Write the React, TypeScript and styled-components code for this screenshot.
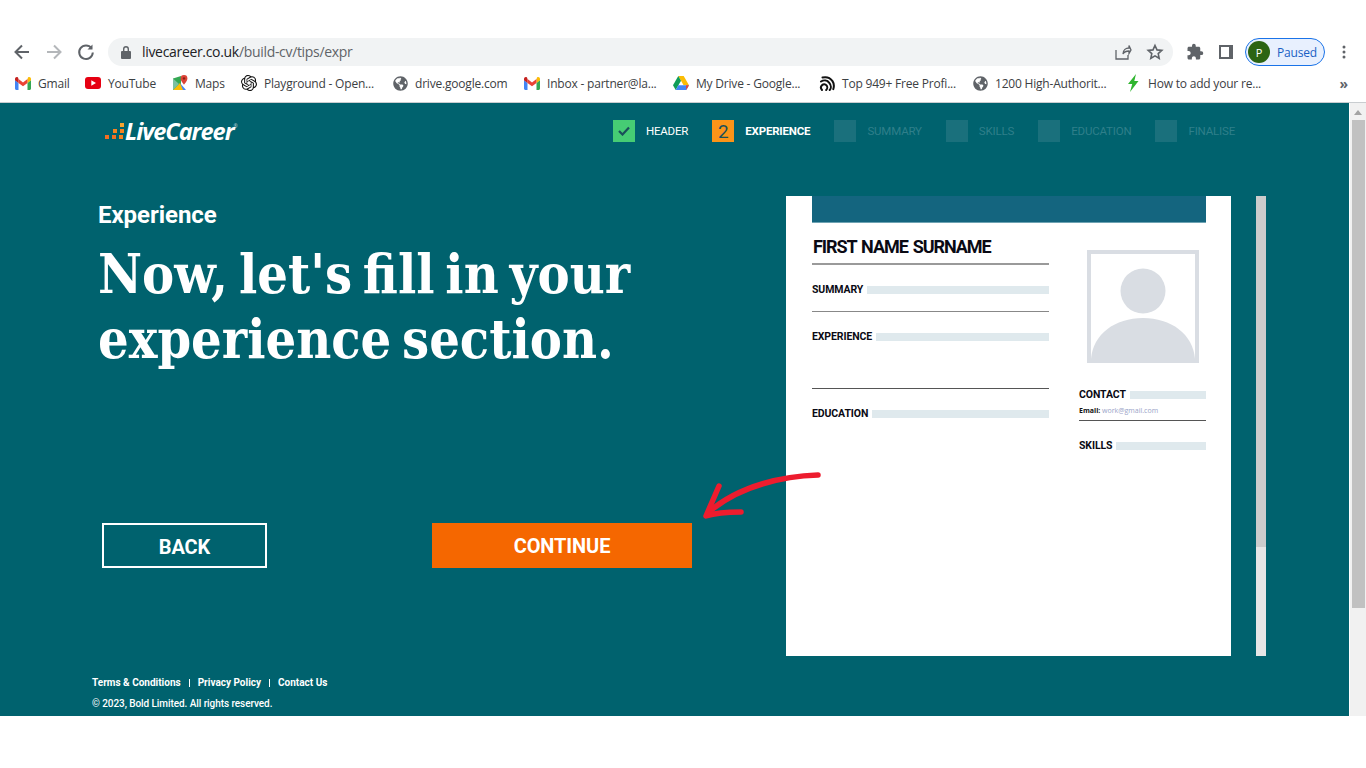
import React from 'react';
import styled, { createGlobalStyle } from 'styled-components';
import { SiOpenai } from 'react-icons/si';
import { FaGlobeAmericas } from 'react-icons/fa';
import { MdExtension } from 'react-icons/md';

const Global = createGlobalStyle`
  html, body { margin: 0; padding: 0; background: #fff; overflow: hidden; }
  * { box-sizing: border-box; }
`;

const Shell = styled.div`
  width: 1366px; height: 768px; display: flex; flex-direction: column; position: relative;
  font-family: "Roboto", "Liberation Sans", sans-serif; background: #fff;
`;
const BrowserChrome = styled.header`
  height: 103px; padding-top: 38px; border-bottom: 1px solid #c9cdd0; background: #fff;
  display: flex; flex-direction: column;
`;
const Toolbar = styled.div`display: flex; align-items: center; height: 28px; padding-left: 12px;`;
const NavGroup = styled.div`display: flex; gap: 12px; margin-right: 12px;`;
const NavIcon = styled.svg`width: 20px; height: 20px; display: block; fill: none;`;
const Omnibox = styled.div`
  width: 1065px; height: 28px; border-radius: 14px; background: #f1f3f4;
  display: flex; align-items: center; padding: 0 9px 0 12px;
`;
const Url = styled.span`
  font: 14px/18px "Open Sans", sans-serif; letter-spacing: -0.32px; color: #5f6368; margin: 0 0 0 10px; flex: 1; white-space: nowrap;
  b { font-weight: 400; color: #202124; }
`;
const OmniActions = styled.div`display: flex; gap: 14px; align-items: center;`;
const ToolActions = styled.div`display: flex; align-items: center; margin-left: 13px;`;
const SidePanelIcon = styled.svg`margin-left: 15px; width: 14px; height: 14px;`;
const MenuIcon = styled.svg`margin-left: 17px; width: 4px; height: 14px;`;
const Pill = styled.div`
  width: 80px; height: 28px; margin-left: 12px; border: 1px solid #1a73e8; border-radius: 14px; background: #e8f0fe;
  display: flex; align-items: center; padding-left: 2px; color: #1a5fc4; font: 12px "Open Sans", sans-serif; letter-spacing: -0.2px;
`;
const Avatar = styled.span`
  width: 22px; height: 22px; border-radius: 50%; background: #2c6413; color: #fff; font-size: 11px;
  display: flex; align-items: center; justify-content: center; margin-right: 7px;
`;
const Bookmarks = styled.nav`
  display: flex; align-items: center; height: 34px; padding-left: 15px;
`;
const Bookmark = styled.div<{ $w: number }>`
  display: flex; align-items: center; gap: 7px; width: ${p => p.$w}px; flex: none; white-space: nowrap;
  font: 12px "Open Sans", sans-serif; letter-spacing: -0.2px; color: #3c4043;
`;
const BmIcon = styled.span`width: 16px; height: 16px; display: flex; align-items: center; justify-content: center; flex: none;`;
const More = styled.span`margin-left: auto; margin-right: 18px; font: 700 14px "Open Sans", sans-serif; color: #5f6368;`;

const Viewport = styled.div`display: flex; height: 613px;`;
const Page = styled.main`
  width: 1349px; background: #00626e; display: flex; flex-direction: column; color: #fff;
`;
const Scrollbar = styled.div`
  width: 17px; background: #f1f1f1; border-left: 1px solid #fff; display: flex; flex-direction: column; align-items: center;
`;
const ScrollArrow = styled.div`
  width: 0; height: 0; border: 4px solid transparent; border-top: 0; border-bottom: 5px solid #a3a3a3; margin: 7px 0 5px;
`;
const ScrollThumb = styled.div`width: 13px; height: 488px; background: #c1c1c1;`;

const TopRow = styled.div`
  height: 56px; display: flex; align-items: center; justify-content: space-between; padding: 0 114px 0 105px;
`;
const Logo = styled.div`display: flex; align-items: center; gap: 1px; height: 20px;`;
const LogoText = styled.span`
  font: italic 700 23.5px "Open Sans", sans-serif; letter-spacing: -1px; color: #fff; position: relative;
  sup { font-size: 5px; position: absolute; right: -4px; top: 8px; opacity: .7; font-style: normal; font-weight: 400; letter-spacing: 0; }
`;
const Steps = styled.ol`display: flex; gap: 24px; margin: 0; padding: 0; list-style: none;`;
const Step = styled.li`display: flex; align-items: center; gap: 11px;`;
const StepBox = styled.span<{ $state: string }>`
  width: 22px; height: 22px; display: flex; align-items: center; justify-content: center; font-size: 19px; color: #1a4f5a;
  background: ${p => (p.$state === 'done' ? '#46cc74' : p.$state === 'active' ? '#fb9418' : '#1a707c')};
`;
const StepLabel = styled.span<{ $state: string }>`
  font-size: 11.5px; letter-spacing: -0.18px; white-space: nowrap;
  font-weight: ${p => (p.$state === 'active' ? 700 : 400)};
  color: ${p => (p.$state === 'todo' ? '#2f7f8a' : '#fff')};
`;

const Content = styled.div`display: flex; margin-top: 37px; height: 460px;`;
const Left = styled.section`width: 786px; padding-left: 98px; display: flex; flex-direction: column;`;
const Eyebrow = styled.h2`margin: 5px 0 0; font-size: 24px; line-height: 28px; font-weight: 700; letter-spacing: -0.05px;`;
const Title = styled.h1`
  margin: 13px 0 0; font: 700 53.6px/65px "DejaVu Serif", "Liberation Serif", serif; font-stretch: condensed; word-spacing: -6px; width: 620px;
`;
const Actions = styled.div`display: flex; gap: 165px; margin-top: 151px; margin-left: 4px;`;
const Btn = styled.button<{ $primary?: boolean }>`
  height: 45px; width: ${p => (p.$primary ? 260 : 165)}px; padding: ${p => (p.$primary ? 0 : '2px 0 0')};
  font: 700 20px "Roboto", sans-serif; color: #fff; letter-spacing: -0.1px;
  background: ${p => (p.$primary ? '#f56700' : 'transparent')};
  border: ${p => (p.$primary ? 'none' : '2px solid #fff')};
`;

const Preview = styled.div`display: flex; gap: 25px;`;
const Sheet = styled.article`
  width: 445px; height: 460px; background: #fff; padding: 0 25px 0 26px; color: #0a0a14;
  font-family: "Open Sans", sans-serif;
`;
const Banner = styled.div`height: 27px; background: #14657f; border-bottom: 1px solid #6ea3b3;`;
const Columns = styled.div`display: flex; gap: 30px;`;
const MainCol = styled.div`width: 237px; padding-top: 14px;`;
const SideCol = styled.div`width: 127px; padding-top: 27px;`;
const Name = styled.div`
  font: 700 18px/20px "Roboto", sans-serif; letter-spacing: -1.05px; word-spacing: 1.5px; padding: 0 0 6px 1px; border-bottom: 2px solid #9a9a9a; white-space: nowrap;
`;
const SectionRow = styled.div<{ $mt: number }>`
  display: flex; align-items: center; gap: 4px; margin-top: ${p => p.$mt}px; height: 12px;
`;
const SectionName = styled.span`font: 700 10.5px/12px "Roboto", sans-serif; letter-spacing: -0.1px; white-space: nowrap;`;
const Filler = styled.span`flex: 1; height: 8px; background: #dfe9ed;`;
const Rule = styled.div<{ $mt: number; $c?: string }>`
  height: 1px; margin-top: ${p => p.$mt}px; background: ${p => p.$c || '#777'};
`;
const Photo = styled.div`
  width: 112px; height: 113px; margin-left: 8px; border: 4px solid #d9dde3; display: block; overflow: hidden;
`;
const PhotoSvg = styled.svg`width: 104px; height: 105px; display: block;`;
const Email = styled.div`
  font: 7px/10px "Open Sans", sans-serif; color: #9aa4c8; margin-top: 5px; white-space: nowrap;
  b { color: #111; font-weight: 700; }
`;
const Track = styled.div`width: 10px; height: 460px; background: #e6e6e6;`;
const Thumb = styled.div`height: 351px; background: #cccccc;`;

const Foot = styled.footer`padding: 21px 0 0 92px; font-size: 10px; font-weight: 700;`;
const FootLinks = styled.div`display: flex; align-items: center; gap: 8px; line-height: 12px; letter-spacing: 0;`;
const Sep = styled.span`width: 1px; height: 8px; background: #fff;`;
const Copy = styled.div`margin-top: 9px; line-height: 12px; font-weight: 500; letter-spacing: -0.07px;`;
const Arrow = styled.svg`position: absolute; left: 695px; top: 465px; width: 135px; height: 62px; pointer-events: none;`;

const Gmail = () => (
  <svg width="16" height="13" viewBox="0 0 16 13">
    <path d="M0 3v8.5C0 12.3.7 13 1.500 13H3.500V6z" fill="#4285f4" />
    <path d="M12.500 13h2c.8 0 1.500-.7 1.500-1.500V3l-3.500 3z" fill="#34a853" />
    <path d="M12.500 2v4L16 3.300V2c0-1.700-1.700-2.500-3-1.500z" fill="#fbbc04" />
    <path d="M3.500 6V2L8 5.400 12.500 2v4L8 9.300z" fill="#ea4335" />
    <path d="M0 2v1.300L3.500 6V2L3 .5C1.700-.5 0 .3 0 2z" fill="#c5221f" />
  </svg>
);
const Youtube = () => (
  <svg width="16" height="12" viewBox="0 0 16 12">
    <rect width="16" height="12" rx="3" fill="#e60012" />
    <path d="M6.300 3.200 11 6l-4.700 2.800z" fill="#fff" />
  </svg>
);
const Maps = () => (
  <svg width="16" height="16" viewBox="0 0 16 16">
    <path d="M1 3.500 9 1v14l-8 0z" fill="#34a853" />
    <path d="M1 15 8 8l4 7z" fill="#fbbc04" />
    <path d="M8 8l6 7H11z" fill="#4285f4" />
    <path d="M1 3.500 7 9l-6 6z" fill="#7cc0a0" />
    <path d="M12 0a3.400 3.400 0 0 0-3.400 3.400C8.600 6 12 9.500 12 9.500S15.400 6 15.400 3.400A3.400 3.400 0 0 0 12 0z" fill="#db4437" />
    <circle cx="12" cy="3.400" r="1.200" fill="#8c1f16" />
  </svg>
);
const Drive = () => (
  <svg width="16" height="14" viewBox="0 0 16 14">
    <path d="M5.300 0h5.400l5.300 9.300h-5.400z" fill="#fbbc04" />
    <path d="M5.300 0 0 9.300l2.700 4.700L8 4.700z" fill="#0f9d58" />
    <path d="M5.300 9.300H16L13.300 14H2.700z" fill="#4285f4" />
    <path d="M13.300 14 16 9.300h-3z" fill="#ea4335" />
  </svg>
);
const Signal = () => (
  <svg width="16" height="16" viewBox="0 0 16 16" fill="none" stroke="#111" strokeWidth="2" strokeLinecap="round">
    <path d="M3 15c-1.300-1.400-1.300-3.500 0-4.800s3.400-1.200 4.500.2 1 3.500-.3 4.600" />
    <path d="M2 6.500C4.800 4.800 8.300 5.300 10.300 7.800s2 5.600.4 7.200" />
    <path d="M3.500 2.500c4-.9 7.800.5 10 3.600 1.500 2.300 1.700 5.300.8 8" />
  </svg>
);
const Bolt = () => (
  <svg width="12" height="18" viewBox="0 0 12 18"><path d="M9 0 1 10h4.200L3 18 11.500 7H7.300z" fill="#2fb52f" /></svg>
);
const Globe = () => <FaGlobeAmericas size={15} color="#5f6368" />;

const marks = [
  { w: 70, t: 'Gmail', i: <Gmail /> },
  { w: 87, t: 'YouTube', i: <Youtube /> },
  { w: 69, t: 'Maps', i: <Maps /> },
  { w: 151, t: 'Playground - Open...', i: <SiOpenai size={16} color="#111" /> },
  { w: 132, t: 'drive.google.com', i: <Globe /> },
  { w: 149, t: 'Inbox - partner@la...', i: <Gmail /> },
  { w: 146, t: 'My Drive - Google...', i: <Drive /> },
  { w: 153, t: 'Top 949+ Free Profi...', i: <Signal /> },
  { w: 153, t: '1200 High-Authorit...', i: <Globe /> },
  { w: 150, t: 'How to add your re...', i: <Bolt /> },
];
const steps = [
  { n: 'HEADER', s: 'done' }, { n: 'EXPERIENCE', s: 'active' }, { n: 'SUMMARY', s: 'todo' },
  { n: 'SKILLS', s: 'todo' }, { n: 'EDUCATION', s: 'todo' }, { n: 'FINALISE', s: 'todo' },
];

export default function App() {
  return (
    <Shell>
      <Global />
      <BrowserChrome>
        <Toolbar>
          <NavGroup>
            <NavIcon viewBox="0 0 20 20" stroke="#5f6368" strokeWidth="2"><path d="M17 10H4M10 3.500 3.500 10l6.500 6.500" /></NavIcon>
            <NavIcon viewBox="0 0 20 20" stroke="#b4b7ba" strokeWidth="2"><path d="M3 10h13M10 3.500l6.500 6.500-6.500 6.500" /></NavIcon>
            <NavIcon viewBox="0 0 20 20" stroke="#5f6368" strokeWidth="2"><path d="M15.500 6.200A6.800 6.800 0 1 0 16.800 10.500" /><path d="M16.500 2.500v5h-5" fill="#5f6368" stroke="none" /></NavIcon>
          </NavGroup>
          <Omnibox>
            <svg width="12" height="14" viewBox="0 0 12 14"><path d="M3 6V4a3 3 0 0 1 6 0v2h1a1 1 0 0 1 1 1v6a1 1 0 0 1-1 1H2a1 1 0 0 1-1-1V7a1 1 0 0 1 1-1zm1.400 0h3.200V4a1.600 1.600 0 0 0-3.200 0z" fill="#5f6368" /></svg>
            <Url><b>livecareer.co.uk</b>/build-cv/tips/expr</Url>
            <OmniActions>
              <svg width="18" height="18" viewBox="0 0 18 18" fill="none" stroke="#5f6368" strokeWidth="1.300"><path d="M2 7v9h12v-4M9 11c0-4 3-6 6-6V2.500L17 7l-2 3.500V8c-3 0-5 1-6 3z" /></svg>
              <svg width="18" height="18" viewBox="0 0 18 18" fill="none" stroke="#5f6368" strokeWidth="1.600"><path d="m9 2.500 2 4.400 4.800.5-3.600 3.200 1 4.700L9 12.900l-4.200 2.400 1-4.700L2.200 7.400 7 6.900z" /></svg>
            </OmniActions>
          </Omnibox>
          <ToolActions>
            <MdExtension size={18} color="#5f6368" />
            <SidePanelIcon viewBox="0 0 14 14"><path d="M1 1h12v12H1z" fill="none" stroke="#5f6368" strokeWidth="2" /><path d="M10 1h3v12h-3z" fill="#5f6368" /></SidePanelIcon>
            <Pill><Avatar>P</Avatar>Paused</Pill>
            <MenuIcon viewBox="0 0 4 14"><circle cx="2" cy="2" r="1.500" fill="#5f6368" /><circle cx="2" cy="7" r="1.500" fill="#5f6368" /><circle cx="2" cy="12" r="1.500" fill="#5f6368" /></MenuIcon>
          </ToolActions>
        </Toolbar>
        <Bookmarks>
          {marks.map(m => (
            <Bookmark key={m.t} $w={m.w}><BmIcon>{m.i}</BmIcon>{m.t}</Bookmark>
          ))}
          <More>»</More>
        </Bookmarks>
      </BrowserChrome>
      <Viewport>
        <Page>
          <TopRow>
            <Logo>
              <svg width="19" height="17" viewBox="0 0 19 17">
                <rect x="15" y="0" width="4" height="4" fill="#f8a431" />
                <rect x="8" y="6" width="4" height="4" fill="#f58220" /><rect x="15" y="6" width="4" height="4" fill="#f58220" />
                <rect x="0" y="12" width="4" height="4" fill="#f26f21" /><rect x="7" y="12" width="4" height="4" fill="#f26f21" /><rect x="14" y="12" width="4" height="4" fill="#f58220" />
              </svg>
              <LogoText>LiveCareer<sup>®</sup></LogoText>
            </Logo>
            <Steps>
              {steps.map((s, i) => (
                <Step key={s.n}>
                  <StepBox $state={s.s}>
                    {s.s === 'done' && <svg width="12" height="10" viewBox="0 0 12 10" fill="none" stroke="#1a4f5a" strokeWidth="2.200"><path d="m1 5 3.500 3.500L11 1.500" /></svg>}
                    {s.s === 'active' && i + 1}
                  </StepBox>
                  <StepLabel $state={s.s}>{s.n}</StepLabel>
                </Step>
              ))}
            </Steps>
          </TopRow>
          <Content>
            <Left>
              <Eyebrow>Experience</Eyebrow>
              <Title>Now, let's fill in your experience section.</Title>
              <Actions>
                <Btn>BACK</Btn>
                <Btn $primary>CONTINUE</Btn>
              </Actions>
            </Left>
            <Preview>
              <Sheet>
                <Banner />
                <Columns>
                  <MainCol>
                    <Name>FIRST NAME SURNAME</Name>
                    <SectionRow $mt={19}><SectionName>SUMMARY</SectionName><Filler /></SectionRow>
                    <Rule $mt={15} $c="#888" />
                    <SectionRow $mt={19}><SectionName>EXPERIENCE</SectionName><Filler /></SectionRow>
                    <Rule $mt={45} $c="#555" />
                    <SectionRow $mt={19}><SectionName>EDUCATION</SectionName><Filler /></SectionRow>
                  </MainCol>
                  <SideCol>
                    <Photo>
                      <PhotoSvg viewBox="0 0 104 105">
                        <circle cx="52" cy="37" r="22.500" fill="#d9dde3" />
                        <path d="M0 105C2 80 24 64 52 64s50 16 52 41z" fill="#d9dde3" />
                      </PhotoSvg>
                    </Photo>
                    <SectionRow $mt={26}><SectionName>CONTACT</SectionName><Filler /></SectionRow>
                    <Email><b>Email:</b> work@gmail.com</Email>
                    <Rule $mt={4} $c="#555" />
                    <SectionRow $mt={19}><SectionName>SKILLS</SectionName><Filler /></SectionRow>
                  </SideCol>
                </Columns>
              </Sheet>
              <Track><Thumb /></Track>
            </Preview>
          </Content>
          <Foot>
            <FootLinks>Terms &amp; Conditions<Sep />Privacy Policy<Sep />Contact Us</FootLinks>
            <Copy>© 2023, Bold Limited. All rights reserved.</Copy>
          </Foot>
        </Page>
        <Scrollbar><ScrollArrow /><ScrollThumb /></Scrollbar>
      </Viewport>
      <Arrow viewBox="0 0 135 62" fill="none" stroke="#ed1c2e" strokeWidth="5.500" strokeLinecap="round" strokeLinejoin="round">
        <path d="M123 10C90 11 45 20 14 47" />
        <path d="M24 21 11 51C20 48 32 47 46 47" />
      </Arrow>
    </Shell>
  );
}
